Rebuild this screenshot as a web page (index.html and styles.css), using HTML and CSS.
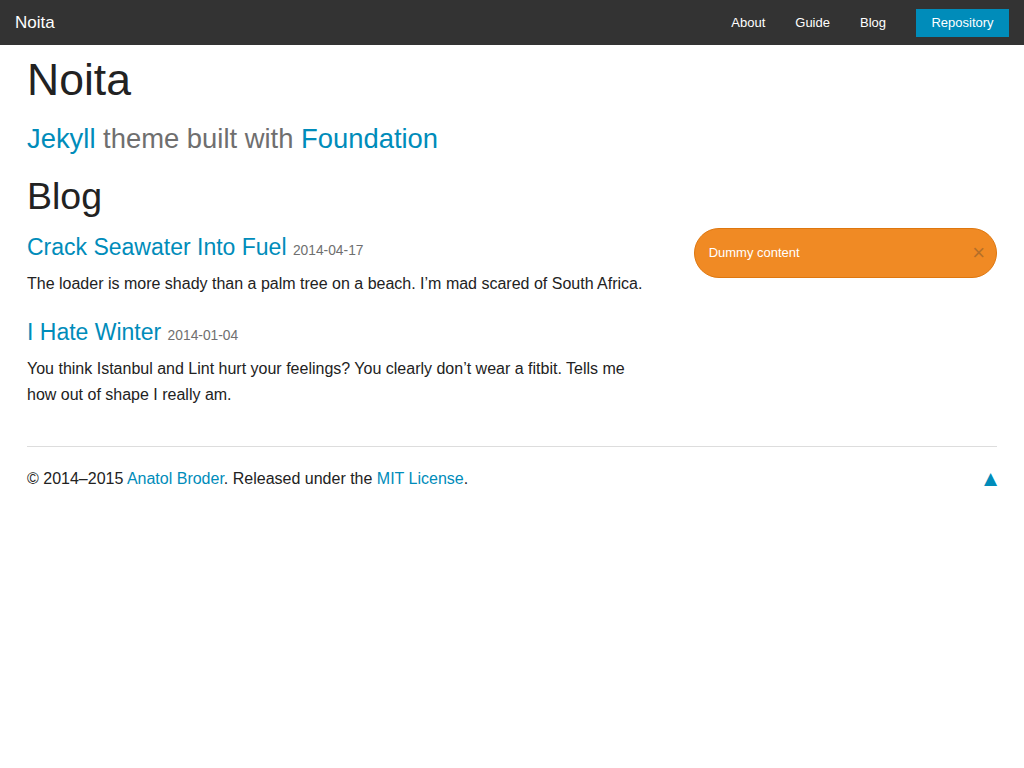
FILE: index.html
```html
<!DOCTYPE html>
<html lang="en">
<head>
<meta charset="utf-8">
<title>Noita</title>
<link rel="stylesheet" href="styles.css">
</head>
<body>
<nav class="top-bar">
  <a class="brand" href="#">Noita</a>
  <ul class="nav">
    <li><a href="#">About</a></li>
    <li><a href="#">Guide</a></li>
    <li><a href="#">Blog</a></li>
    <li class="has-form"><a class="button" href="#">Repository</a></li>
  </ul>
</nav>

<div class="page">
  <header class="masthead">
    <h1 class="site-title">Noita</h1>
    <h3 class="subheader"><a href="#">Jekyll</a> theme built with <a href="#">Foundation</a></h3>
    <h2 class="page-title">Blog</h2>
  </header>

  <div class="row">
    <main class="main">
      <article class="post">
        <h4 class="post-title"><a href="#">Crack Seawater Into Fuel</a> <small>2014-04-17</small></h4>
        <p>The loader is more shady than a palm tree on a beach. I’m mad scared of South Africa.</p>
      </article>
      <article class="post">
        <h4 class="post-title"><a href="#">I Hate Winter</a> <small>2014-01-04</small></h4>
        <p>You think Istanbul and Lint hurt your feelings? You clearly don’t wear a fitbit. Tells me how out of shape I really am.</p>
      </article>
    </main>
    <aside class="sidebar">
      <div class="alert-box">Dummy content<a href="#" class="close">×</a></div>
    </aside>
  </div>

  <footer class="footer">
    <p class="copyright">© 2014–2015 <a href="#">Anatol Broder</a>. Released under the <a href="#">MIT License</a>.</p>
    <a class="to-top" href="#">▲</a>
  </footer>
</div>
</body>
</html>
```

FILE: styles.css
```css
* { box-sizing: border-box; }

html, body {
  margin: 0;
  padding: 0;
  background: #fff;
  color: #222;
  font-family: "Liberation Sans", Arial, sans-serif;
  font-size: 16px;
  line-height: 1.5;
}

a { color: #008cba; text-decoration: none; }

/* top bar */
.top-bar {
  height: 45px;
  background: #333;
  display: flex;
  align-items: center;
  justify-content: space-between;
}
.brand {
  color: #fff;
  font-size: 17px;
  line-height: 45px;
  padding-left: 15px;
}
.nav {
  list-style: none;
  margin: 0;
  padding: 0;
  display: flex;
  align-items: center;
  height: 45px;
}
.nav li a {
  display: block;
  color: #fff;
  font-size: 13px;
  line-height: 45px;
  padding: 0 15px;
}
.nav li.has-form {
  padding: 0 15px;
}
.nav li.has-form a.button {
  background: #008cba;
  line-height: 28px;
  height: 28px;
  padding: 0 15px;
  width: 93px;
  text-align: center;
}

/* page */
.page {
  max-width: 1000px;
  margin: 0 auto;
  padding: 0 15px;
}

h1, h2, h3, h4 {
  font-weight: normal;
  line-height: 1.4;
  margin: 0;
}

.site-title {
  font-size: 44.5px;
  color: #222;
  margin: 4px 0 9px;
}
.subheader {
  font-size: 27.4px;
  color: #6f6f6f;
  margin: 0 0 11px;
}
.page-title {
  font-size: 37.5px;
  color: #222;
  margin: 0 0 6px;
}

.row {
  display: flex;
  margin: 0 -15px;
}
.main {
  flex: 0 0 66.6667%;
  padding: 0 25px 0 15px;
}
.sidebar {
  flex: 0 0 33.3333%;
  padding: 0 15px;
}

.post-title {
  font-size: 23px;
  margin: 3px 0 7.5px;
}
.post + .post .post-title { margin-top: 0; }
.post-title small {
  font-size: 60%;
  color: #6f6f6f;
}

p {
  margin: 0 0 20px;
  font-size: 16px;
  line-height: 1.6;
}

.alert-box {
  position: relative;
  background: #f08a24;
  border: 1px solid #de770f;
  border-radius: 1000px;
  color: #fff;
  font-size: 13px;
  line-height: 19.5px;
  padding: 14px 24px 14px 14px;
  margin-bottom: 20px;
}
.alert-box .close {
  position: absolute;
  right: 11px;
  top: 50%;
  transform: translateY(-50%);
  font-size: 22px;
  line-height: 1;
  color: #333;
  opacity: 0.3;
}

.footer {
  border-top: 1px solid #ddd;
  margin-top: 19px;
  padding-top: 19px;
  display: flex;
  justify-content: space-between;
  align-items: flex-start;
}
.copyright { margin: 0 0 20px; }
.to-top {
  font-family: "DejaVu Sans", sans-serif;
  font-size: 17px;
  line-height: 25.6px;
}
```
